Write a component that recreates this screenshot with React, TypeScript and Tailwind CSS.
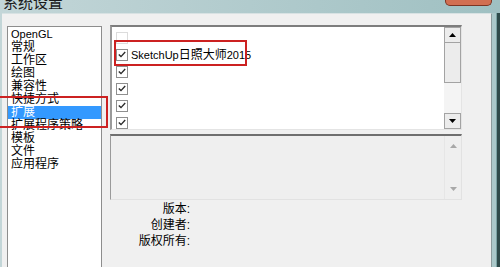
import React from 'react'

const font = { fontFamily: '"Liberation Sans", "Noto Sans CJK SC", sans-serif' }

const pages = [
  'OpenGL',
  '常规',
  '工作区',
  '绘图',
  '兼容性',
  '快捷方式',
  '扩展',
  '扩展程序策略',
  '模板',
  '文件',
  '应用程序',
]

const Check = ({ checked, faint }: { checked: boolean; faint?: boolean }) => (
  <div
    className={`flex h-[12px] w-[12px] shrink-0 items-center justify-center border bg-white ${
      faint ? 'border-[#dcdcdc]' : 'border-[#8f8f8f]'
    }`}
  >
    {checked && (
      <svg width="8" height="7" viewBox="0 0 8 7">
        <path d="M0.8 3.4 L3 5.6 L7.2 1" stroke="#2b2b2b" strokeWidth="1.4" fill="none" />
      </svg>
    )}
  </div>
)

const Arrow = ({ up, light }: { up?: boolean; light?: boolean }) => (
  <svg width="7" height="4" viewBox="0 0 7 4">
    <path d={up ? 'M0 4 L3.5 0 L7 4 Z' : 'M0 0 L7 0 L3.5 4 Z'} fill={light ? '#a8a8a8' : '#000'} />
  </svg>
)

export default function App() {
  const rows = [
    { checked: false, faint: true, label: false },
    { checked: true, label: true },
    { checked: true, label: false },
    { checked: true, label: false },
    { checked: true, label: false },
    { checked: true, label: false },
  ]
  return (
    <div
      className="relative flex h-[267px] w-[500px] flex-col overflow-hidden bg-[#b2cbcd] bg-linear-to-r from-[#c3d6d8] to-[#9fc0c2] text-[12px] text-black"
      style={font}
    >
      {/* title bar */}
      <div className="h-[13px] shrink-0 overflow-hidden">
        <div className="ml-[3px] mt-[-5px] text-[15px] leading-[16px] text-[#1b1b1b]">系统设置</div>
      </div>

      <div className="flex min-h-0 flex-1">
        <div className="w-[2px]" />
        {/* dialog body */}
        <div className="flex flex-1 border-r border-t border-r-[#8c9c9d] border-t-[#d8e2e3] bg-[#f0f0f0] pl-[5px] pt-[12px]">
          {/* page list */}
          <div className="h-[260px] w-[95px] shrink-0 border border-[#8d8d8d] bg-white pt-[1px]">
            {pages.map((p, i) => (
              <div
                key={p}
                className={`h-[13px] whitespace-nowrap pl-[3px] leading-[13px] ${
                  i === 0 ? 'text-[11px]' : ''
                } ${i === 6 ? 'bg-[#3399ff] text-white' : ''}`}
              >
                {p}
              </div>
            ))}
          </div>

          {/* right side */}
          <div className="ml-[8px] flex w-[352px] flex-col">
            <div className="mt-[-1px] flex h-[105px] border-b border-l-2 border-r border-t-2 border-b-[#e4e4e4] border-l-[#9a9a9a] border-r-[#e4e4e4] border-t-[#7d7d7d] bg-white">
              <div className="flex-1 overflow-hidden pl-[4px] pt-[2px]">
                {rows.map((r, i) => (
                  <div key={i} className="flex h-[17px] items-center gap-[3px]">
                    <Check checked={r.checked} faint={r.faint} />
                    {r.label && (
                      <span className="whitespace-nowrap leading-[12px]">
                        <span className="text-[11px]">SketchUp</span>
                        日照大师
                        <span className="text-[11px]">2015</span>
                      </span>
                    )}
                  </div>
                ))}
              </div>
              <div className="flex w-[17px] flex-col">
                <div className="flex h-[16px] items-center justify-center border border-[#a3a3a3] bg-[#ececec]">
                  <Arrow up />
                </div>
                <div className="h-[40px] border border-t-0 border-[#a3a3a3] bg-[#ececec]" />
                <div className="flex-1 bg-[#f4f4f4]" />
                <div className="flex h-[16px] items-center justify-center border border-[#a3a3a3] bg-[#ececec]">
                  <Arrow />
                </div>
              </div>
            </div>

            <div className="mt-[4px] flex h-[66px] border-b border-l border-r border-t-2 border-b-[#e2e2e2] border-l-[#9a9a9a] border-r-[#e2e2e2] border-t-[#6f6f6f] bg-[#efefef]">
              <div className="flex-1" />
              <div className="flex w-[17px] flex-col items-center justify-between border-l border-[#e6e6e6] py-[8px]">
                <Arrow up light />
                <Arrow light />
              </div>
            </div>

            <div className="flex flex-col pt-[1px]">
              {['版本:', '创建者:', '版权所有:'].map((l) => (
                <div key={l} className="w-[80px] text-right leading-[16px]">
                  {l}
                </div>
              ))}
            </div>
          </div>
        </div>
        {/* right frame */}
        <div className="flex w-[8px]">
          <div className="w-[4px] bg-[#abc9ca]" />
          <div className="w-[1px] bg-[#7aa3a4]" />
          <div className="w-[3px] bg-[#2f4b4a]" />
        </div>
      </div>

      {/* close button, cut by the top edge */}
      <div className="absolute right-[8px] top-0 h-[6px] w-[47px] rounded-b-[5px] border-x border-b border-[#7c3524] bg-[#d26f52]" />

      {/* annotation boxes */}
      <div className="absolute left-[-2px] top-[96px] h-[32px] w-[110px] border-2 border-[#cc2121]" />
      <div className="absolute left-[114px] top-[40px] h-[26px] w-[133px] border-2 border-[#cc2121]" />
    </div>
  )
}
